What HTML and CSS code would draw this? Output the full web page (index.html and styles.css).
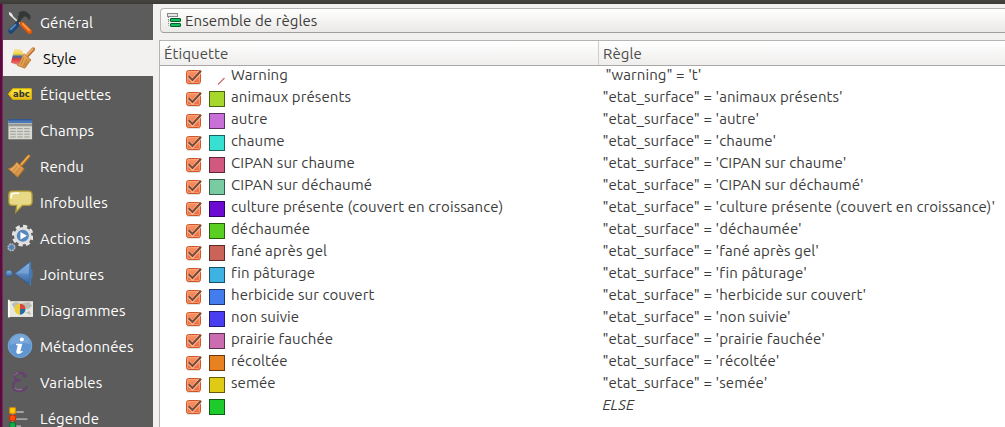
FILE: index.html
```html
<!DOCTYPE html>
<html lang="fr">
<head>
<meta charset="utf-8">
<title>Propriétés de la couche</title>
<link rel="stylesheet" href="styles.css">
</head>
<body>
<svg class="defs" width="0" height="0" aria-hidden="true">
  <defs>
    <linearGradient id="orange" x1="0" y1="0" x2="0" y2="1"><stop offset="0" stop-color="#fb9468"/><stop offset="1" stop-color="#ea6a3c"/></linearGradient>
    <linearGradient id="blue" x1="0" y1="0" x2="0" y2="1"><stop offset="0" stop-color="#8db8e8"/><stop offset="1" stop-color="#2f5f9f"/></linearGradient>
    <linearGradient id="wood" x1="0" y1="0" x2="1" y2="1"><stop offset="0" stop-color="#f6bf74"/><stop offset="1" stop-color="#c98236"/></linearGradient>
    <linearGradient id="yellow" x1="0" y1="0" x2="0" y2="1"><stop offset="0" stop-color="#fff04a"/><stop offset="1" stop-color="#e3b91c"/></linearGradient>
    <linearGradient id="rainbow" x1="0" y1="0" x2="0" y2="1"><stop offset="0" stop-color="#f5e3b0"/><stop offset=".3" stop-color="#f5d43c"/><stop offset=".45" stop-color="#4169a8"/><stop offset=".62" stop-color="#d93a3c"/><stop offset="1" stop-color="#f08a80"/></linearGradient>
    <symbol id="check" viewBox="0 0 17 17">
      <rect x="1" y="15" width="13" height="1" fill="#e4e2df"/>
      <rect x=".5" y="1.5" width="14" height="13" rx="2" fill="url(#orange)" stroke="#cf5626"/>
      <rect x="1.5" y="2.5" width="12" height="11" rx="1" fill="none" stroke="#ffad88" stroke-opacity=".6"/>
      <path d="M2.700 7.400 6.500 11.400 14 3" fill="none" stroke="#ffc5a5" stroke-width="3.600"/>
      <path d="M2.700 7.200 6.500 11 15 1.800" fill="none" stroke="#7d4a35" stroke-width="2.200"/>
    </symbol>
  </defs>
</svg>
<div class="titlebar"></div>
<div class="window">
  <div class="desktop-edge"></div>
  <nav class="sidebar">
    <a class="item"><svg class="icon" viewBox="0 0 28 28"><path d="M3 5.500 15 17" stroke="#e4e7e7" stroke-width="1.700"/><path d="m2 3 3 1.500 1.500 2.700-1.500 1-2.600-2.200z" fill="#e8e8e8"/><path d="M12 4.500c4-3.200 7-3 10-.7l3.500 3.400-.7 4.300-2.300-.5-.8-2.300-3.200-.6-4 4-3.200-3.500 2-2.800z" fill="#333936"/><path d="m14 11-5 6" stroke="#343936" stroke-width="3"/><path d="M16 16 24.500 24.500" stroke="#e05a08" stroke-width="5" stroke-linecap="round"/><path d="M16.500 15.500 24.500 23.500" stroke="#ff9d48" stroke-width="2"/><path d="M10.800 17 4 24" stroke="#1d4878" stroke-width="5.500" stroke-linecap="round"/><path d="m9.500 16.500-6 6" stroke="#5c90c6" stroke-width="1.800"/></svg><span>Général</span></a>
    <a class="item selected"><svg class="icon" viewBox="0 0 28 28"><path d="M4.500 4.500c4 0 7-1 9.500 3l-1 11-3 3.500L1 19z" fill="url(#rainbow)"/><path d="M25 4.500 18 12" stroke="#b86c2b" stroke-width="4" stroke-linecap="round"/><path d="m24.500 4.500-8 8" stroke="#efad69" stroke-width="2" stroke-linecap="round"/><path d="m15 9.500 7.500 6.500-6.500 9L8 22c3-3 4-7 7-12.500z" fill="url(#wood)" stroke="#c37f3c"/><path d="m15 13-3 8m6-6-3.500 8M20 17l-4 6" stroke="#b66d28" stroke-width=".7"/></svg><span>Style</span></a>
    <a class="item"><svg class="icon" viewBox="0 0 28 28"><path d="M6.500 8.500h19.500v11H6.500L2 14z" fill="url(#yellow)" stroke="#f0c400" stroke-width="1.500" stroke-linejoin="round"/><text x="6.500" y="17.500" class="abc" textLength="18" lengthAdjust="spacingAndGlyphs">abc</text></svg><span>Étiquettes</span></a>
    <a class="item"><svg class="icon" viewBox="0 0 28 28"><path d="M1.500 4h25.500v20H1.500z" fill="#d7d9d2"/><path d="M1.500 2.500H27v4H1.500z" fill="#4b78b7"/><path d="M1.500 3H27" stroke="#234f8c"/><path d="M1.500 7H27v3H1.500z" fill="#979a92"/><path d="M3.500 12.500h6m1.500 0h6m1.500 0h6m-21 3h6m1.500 0h6m1.500 0h6m-21 3h6m1.500 0h6m1.500 0h6m-21 3h6m1.500 0h6m1.500 0h6" stroke="#969990"/></svg><span>Champs</span></a>
    <a class="item"><svg class="icon" viewBox="0 0 28 28"><path d="m23.500 3.500-8 9" stroke="#ba711e" stroke-width="3.600" stroke-linecap="round"/><path d="m23.500 3-8 9" stroke="#efb45a" stroke-width="1.600" stroke-linecap="round"/><path d="m10.500 10 8 7-7 9L1.500 17c4-.5 6-3 9-7z" fill="url(#wood)" stroke="#bd7623"/><path d="m11 14-5 6m8-4-5 6" stroke="#b56e25" stroke-width=".7"/></svg><span>Rendu</span></a>
    <a class="item"><svg class="icon" viewBox="0 0 28 28"><path d="M6 2.200h17q4 0 4 4v7.500q0 4-4 4h-6.500L9.500 25l1-7.300H6q-4 0-4-4V6.200q0-4 4-4z" fill="#e7d986" stroke="#b19a31" stroke-width="1.400"/><path d="M4.500 10V8q0-3.500 4-3.500H13" fill="none" stroke="#fff" stroke-width="1.700"/></svg><span>Infobulles</span></a>
    <a class="item"><svg class="icon tall" viewBox="0 0 28 31"><circle cx="17" cy="12.500" r="10" fill="none" stroke="#e5e5e5" stroke-width="3.500" stroke-dasharray="4.400 3.450"/><circle cx="17" cy="12.500" r="8" fill="#5688bf" stroke="#dedede" stroke-width="3"/><path d="m14.500 8.500 7 4-7 4z" fill="#fff"/><circle cx="4.800" cy="25" r="3.500" fill="#4c83bd" stroke="#b4b6b6" stroke-width="1.800" stroke-dasharray="2 .7"/></svg><span>Actions</span></a>
    <a class="item"><svg class="icon wide" viewBox="0 0 28 28"><circle cx="4" cy="13.500" r="3.200" fill="url(#blue)" stroke="#31588b" stroke-width=".6"/><path d="M9.500 13.500 25 2v23z" fill="url(#blue)" stroke="#2d578b" stroke-width=".7"/><path d="M24.500 1.500h1.500v7l1.500 2v7L26 19v6.500h-1.500z" fill="#4678b5"/><path d="m11 13.500 13-8v8z" fill="#7da8da" fill-opacity=".65"/></svg><span>Jointures</span></a>
    <a class="item"><svg class="icon" viewBox="0 0 28 28"><path d="M2 4.500h26v17H2z" fill="#e7e6df"/><path d="M1 3h2v19H1z" fill="#fff"/><path d="m5 7.500 4-2 5 1-3 3 1 5-4-2zm11-1 8-1 3 4-4 4-4-2zM20 17l4-2 2 4z" fill="#bcbcb6"/><path d="M14 13V7a6 6 0 0 1 6 6z" fill="#d74735"/><path d="M14 13h6a6 6 0 0 1-6 6z" fill="#246ea3"/><path d="M14 19a6 6 0 0 1 0-12z" fill="#edcc3c"/></svg><span>Diagrammes</span></a>
    <a class="item"><svg class="icon" viewBox="0 0 28 28"><circle cx="14" cy="13.700" r="12.700" fill="#5f95d0" stroke="#7baee2"/><path d="M3 13a11 11 0 0 1 22-1q-12-3-22 1z" fill="#79a6d8"/><circle cx="16" cy="7" r="2.200" fill="#fff"/><path d="M10 11.500h6.500L14.300 20l2.700-.8-.5 1.500Q13.500 22.700 12 22.500q-2.500-.5-2-2.500l1.500-6.700H9.500z" fill="#fff"/></svg><span>Métadonnées</span></a>
    <a class="item"><svg class="icon" viewBox="0 0 28 28"><path d="M19 8.500Q18.500 4 13.500 4 8.500 4 8.500 8.500q0 3.500 6 4-8 0-8 5.200Q6.500 23.500 12.500 23.500q7 0 9-5" fill="none" stroke="#66426f" stroke-width="2.600"/><circle cx="19.500" cy="7.500" r="1.900" fill="#66426f"/><path d="M8 7q1.500-2.500 4-3M8 20.500q3 3 8 1.500" fill="none" stroke="#a989ad" stroke-width=".8"/></svg><span>Variables</span></a>
    <a class="item"><svg class="icon" viewBox="0 0 28 28"><path d="M6 4v24M10 7.500h8m-8 7.700h12m-12 7.700h5" stroke="#a3a3a3" stroke-width="2"/><path d="M3 3h6v6H3z" fill="#ffce00" stroke="#e98d00"/><path d="M3 11h6v6H3z" fill="#ff4d08" stroke="#c92a00"/><path d="M3 19h6v6H3z" fill="#12b04a" stroke="#086c2d"/></svg><span>Légende</span></a>
  </nav>
  <main class="panel">
    <div class="renderer"><svg class="rules-icon" viewBox="0 0 15 15"><path d="M1.500 4v8.500H4M1.500 7.500H4" fill="none" stroke="#8d8d8d" stroke-dasharray="1 1"/><rect x=".5" y=".5" width="10" height="3" fill="#e8e8e8" stroke="#888"/><rect x="3.500" y="5.500" width="10" height="3" rx=".5" fill="#12bd5c" stroke="#075c2b"/><rect x="3.500" y="10.500" width="10" height="3" rx=".5" fill="#12bd5c" stroke="#075c2b"/></svg><span>Ensemble de règles</span></div>
    <div class="tree">
      <div class="header"><div class="col-label">Étiquette</div><div class="col-rule">Règle</div></div>
      <div class="row"><svg class="check"><use href="#check"/></svg><svg class="swatch line" viewBox="0 0 16 16"><path d="m9 15.500 6.500-6.500" stroke="#cb6568" stroke-width="1.100"/></svg><span class="name">Warning</span><span class="rule shifted">"warning" = 't'</span></div>
      <div class="row"><svg class="check"><use href="#check"/></svg><i class="swatch lime"></i><span class="name">animaux présents</span><span class="rule">"etat_surface" = 'animaux présents'</span></div>
      <div class="row"><svg class="check"><use href="#check"/></svg><i class="swatch orchid"></i><span class="name">autre</span><span class="rule">"etat_surface" = 'autre'</span></div>
      <div class="row"><svg class="check"><use href="#check"/></svg><i class="swatch turquoise"></i><span class="name">chaume</span><span class="rule">"etat_surface" = 'chaume'</span></div>
      <div class="row"><svg class="check"><use href="#check"/></svg><i class="swatch rose"></i><span class="name">CIPAN sur chaume</span><span class="rule">"etat_surface" = 'CIPAN sur chaume'</span></div>
      <div class="row"><svg class="check"><use href="#check"/></svg><i class="swatch mint"></i><span class="name">CIPAN sur déchaumé</span><span class="rule">"etat_surface" = 'CIPAN sur déchaumé'</span></div>
      <div class="row"><svg class="check"><use href="#check"/></svg><i class="swatch purple"></i><span class="name">culture présente (couvert en croissance)</span><span class="rule">"etat_surface" = 'culture présente (couvert en croissance)'</span></div>
      <div class="row"><svg class="check"><use href="#check"/></svg><i class="swatch green"></i><span class="name">déchaumée</span><span class="rule">"etat_surface" = 'déchaumée'</span></div>
      <div class="row"><svg class="check"><use href="#check"/></svg><i class="swatch brick"></i><span class="name">fané après gel</span><span class="rule">"etat_surface" = 'fané après gel'</span></div>
      <div class="row"><svg class="check"><use href="#check"/></svg><i class="swatch sky"></i><span class="name">fin pâturage</span><span class="rule">"etat_surface" = 'fin pâturage'</span></div>
      <div class="row"><svg class="check"><use href="#check"/></svg><i class="swatch azure"></i><span class="name">herbicide sur couvert</span><span class="rule">"etat_surface" = 'herbicide sur couvert'</span></div>
      <div class="row"><svg class="check"><use href="#check"/></svg><i class="swatch indigo"></i><span class="name">non suivie</span><span class="rule">"etat_surface" = 'non suivie'</span></div>
      <div class="row"><svg class="check"><use href="#check"/></svg><i class="swatch pink"></i><span class="name">prairie fauchée</span><span class="rule">"etat_surface" = 'prairie fauchée'</span></div>
      <div class="row"><svg class="check"><use href="#check"/></svg><i class="swatch amber"></i><span class="name">récoltée</span><span class="rule">"etat_surface" = 'récoltée'</span></div>
      <div class="row"><svg class="check"><use href="#check"/></svg><i class="swatch gold"></i><span class="name">semée</span><span class="rule">"etat_surface" = 'semée'</span></div>
      <div class="row"><svg class="check"><use href="#check"/></svg><i class="swatch emerald"></i><span class="name"></span><span class="rule else">ELSE</span></div>
    </div>
  </main>
</div>
</body>
</html>
```
FILE: styles.css
```css
* { box-sizing: border-box; }
body { margin: 0; width: 1005px; height: 427px; overflow: hidden; background: #f2f1f0; font-family: Ubuntu, "Noto Sans", sans-serif; font-size: 15px; letter-spacing: .085px; color: #3c3c3c; }
.defs { position: absolute; }
.titlebar { height: 4px; background: linear-gradient(#45443f, #3c3b37); }
.window { display: flex; height: 423px; }
.desktop-edge { width: 3px; background: linear-gradient(90deg, #5b0a3b 66%, #792361 66%); }
.sidebar { width: 150px; height: 423px; overflow: hidden; background: #5c5c5c; color: #fff; flex: none; }
.item { display: flex; height: 36px; padding: 0 0 0 4px; gap: 7px; align-items: center; line-height: 20px; white-space: nowrap; }
.item span { padding-top: 1px; }
.item.selected { background: #f2f1f0; color: #000; padding-left: 7px; }
.icon { width: 26px; height: 26px; flex: none; }
.icon.wide { width: 28px; height: 28px; margin-left: -2px; }
.icon.tall { height: 29px; }
.abc { font: bold 9px "DejaVu Sans", sans-serif; letter-spacing: 0; fill: #33342d; }
.panel { flex: 1; padding: 4px 0 0 6px; min-width: 0; }
.renderer { height: 25px; margin-left: 1px; border: 1px solid #b9b5b0; border-right: 0; border-bottom-color: #a29e99; border-radius: 4px 0 0 4px; background: linear-gradient(#fff, #ebe9e7); display: flex; align-items: center; padding-left: 6px; gap: 3px; white-space: nowrap; }
.rules-icon { width: 15px; height: 15px; flex: none; }
.tree { margin-top: 7px; height: 388px; border-left: 1px solid #b6b3b0; border-top: 1px solid #b6b3b0; background: #fff; overflow: hidden; }
.header { display: flex; height: 25px; line-height: 25px; border-bottom: 1px solid #aaa7a4; background: linear-gradient(#fff, #efeeed); color: #4c4c4c; }
.col-label { width: 439px; padding-left: 4px; border-right: 1px solid #d0cdca; }
.col-rule { padding-left: 4px; }
.row { display: grid; grid-template-columns: 17px 16px 365px auto; column-gap: 6px; height: 22px; padding-left: 26px; white-space: pre; line-height: 18px; }
.check { width: 17px; height: 17px; margin-top: 3px; }
.swatch { width: 16px; height: 16px; margin-top: 3px; border: 1px solid rgba(0, 0, 0, .55); background-clip: border-box; }
.swatch.line { border: 0; }
.rule { padding-left: .4px; }
.rule.shifted { padding-left: 3.400px; }
.else { font-style: italic; }
.lime { background-color: #a6d82b; }
.orchid { background-color: #c870d8; }
.turquoise { background-color: #37e0d0; }
.rose { background-color: #d15980; }
.mint { background-color: #79cba2; }
.purple { background-color: #6e0bd3; }
.green { background-color: #59cf22; }
.brick { background-color: #ca6358; }
.sky { background-color: #3eb2e3; }
.azure { background-color: #437ded; }
.indigo { background-color: #493ff0; }
.pink { background-color: #cc6cb0; }
.amber { background-color: #e8811f; }
.gold { background-color: #dfcb16; }
.emerald { background-color: #1dcb2d; }
```
